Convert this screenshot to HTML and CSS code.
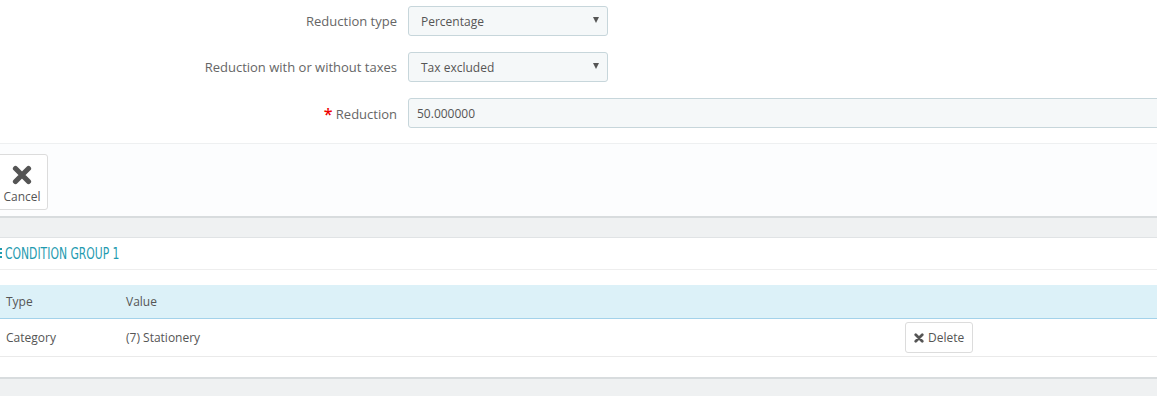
FILE: index.html
```html
<!DOCTYPE html>
<html>
<head>
<meta charset="utf-8">
<link rel="stylesheet" href="styles.css">
</head>
<body>
<div class="page">
  <div class="form-panel">
    <div class="form-body">
      <div class="form-group">
        <label class="lbl">Reduction type</label>
        <div class="select"><span>Percentage</span><span class="caret"></span></div>
      </div>
      <div class="form-group">
        <label class="lbl">Reduction with or without taxes</label>
        <div class="select"><span>Tax excluded</span><span class="caret"></span></div>
      </div>
      <div class="form-group">
        <label class="lbl"><span class="req">*</span> Reduction</label>
        <div class="input">50.000000</div>
      </div>
    </div>
    <div class="form-footer">
      <button class="btn-cancel">
        <svg class="icon-x" viewBox="0 0 20 20" width="20" height="20"><path d="M3.5 3.5 L16.5 16.5 M16.5 3.5 L3.5 16.5" stroke="#555" stroke-width="5.2" stroke-linecap="round"/></svg>
        <span>Cancel</span>
      </button>
    </div>
  </div>
  <div class="panel">
    <div class="panel-heading"><span class="list-icon"></span><span class="h-text">CONDITION GROUP 1</span></div>
    <div class="table">
      <div class="thead">
        <div class="c-type">Type</div>
        <div class="c-val">Value</div>
        <div class="c-act"></div>
      </div>
      <div class="trow">
        <div class="c-type">Category</div>
        <div class="c-val">(7) Stationery</div>
        <div class="c-act"><button class="btn-del"><svg viewBox="0 0 20 20" width="10" height="10"><path d="M3.5 3.5 L16.5 16.5 M16.5 3.5 L3.5 16.5" stroke="#555" stroke-width="5.5" stroke-linecap="round"/></svg>Delete</button></div>
      </div>
    </div>
  </div>
</div>
</body>
</html>
```

FILE: styles.css
```css
* { box-sizing: border-box; }
html, body { margin: 0; padding: 0; }
body {
  background: #eff1f2;
  font-family: "Open Sans", "Liberation Sans", sans-serif;
  font-size: 12px;
  color: #555;
  width: 1157px;
  height: 396px;
  overflow: hidden;
}
.page { margin-left: -6px; width: 1200px; }
.form-panel {
  background: #fff;
  border-bottom: 2px solid #d8dcde;
}
.form-body { padding-top: 6px; }
.form-group {
  display: flex;
  align-items: center;
  margin-bottom: 16px;
}
.form-group:last-child { margin-bottom: 15px; }
.lbl {
  width: 414px;
  text-align: right;
  padding-right: 11px;
  color: #666;
  font-size: 13px;
}
.req { color: #e00; font-size: 16px; font-weight: 600; position: relative; top: 1px; }
.select {
  width: 200px;
  height: 30px;
  background: #f5f8f9;
  border: 1px solid #c7d6db;
  border-radius: 3px;
  display: flex;
  align-items: center;
  justify-content: space-between;
  padding: 0 8px 0 12px;
  color: #555;
}
.caret {
  width: 0; height: 0;
  border-left: 3px solid transparent;
  border-right: 3px solid transparent;
  border-top: 6px solid #555;
  margin-top: -2px;
}
.input {
  flex: 1;
  height: 30px;
  background: #f5f8f9;
  border: 1px solid #c7d6db;
  border-radius: 3px 0 0 3px;
  display: flex;
  align-items: center;
  padding-left: 8px;
  color: #555;
}
.form-footer {
  background: #fcfdfe;
  border-top: 1px solid #eef0f1;
  padding: 10px 0 6px 0;
  height: 73px;
}
.btn-cancel {
  width: 54px;
  height: 56px;
  background: #fff;
  border: 1px solid #dcdcdc;
  border-radius: 3px;
  display: flex;
  flex-direction: column;
  align-items: center;
  justify-content: flex-start;
  padding: 10px 0 0 2px;
  font-family: "Open Sans", sans-serif;
  font-size: 12px;
  color: #555;
}
.icon-x { display: block; margin-bottom: 3px; margin-left: 0; }
.panel {
  margin-top: 19px;
  background: #fff;
  border-top: 1px solid #e0e3e5;
  border-bottom: 2px solid #d8dcde;
  padding-bottom: 20px;
}
.panel-heading {
  position: relative;
  height: 32px;
  border-bottom: 1px solid #eeeeee;
  color: #1f9bb0;
  display: flex;
  align-items: center;
  padding-left: 11px;
  margin-bottom: 15px;
}
.h-text {
  font-family: "Liberation Sans Narrow", "DejaVu Sans Condensed", "DejaVu Sans", sans-serif;
  font-stretch: condensed;
  font-size: 15px;
  display: inline-block;
  transform: scaleX(0.8);
  transform-origin: left center;
}
.list-icon {
  position: absolute;
  left: 6px;
  top: 10px;
  width: 2px;
  height: 11px;
  background: repeating-linear-gradient(#1f9bb0 0 2px, transparent 2px 4px);
}
.thead, .trow { display: flex; align-items: center; }
.thead {
  height: 34px;
  background: #dcf1f8;
  border-bottom: 1px solid #a3d2ea;
  color: #555;
}
.trow {
  height: 38px;
  border-bottom: 1px solid #eaeaea;
}
.c-type { width: 126px; padding-left: 12px; }
.c-val { width: 785px; padding-left: 6px; }
.c-act { flex: 1; }
.btn-del {
  height: 31px;
  width: 68px;
  background: #fff;
  border: 1px solid #dcdcdc;
  border-radius: 3px;
  font-family: "Open Sans", sans-serif;
  font-size: 12px;
  color: #555;
  display: flex;
  align-items: center;
  gap: 4px;
  padding: 0 0 0 8px;
}
```
